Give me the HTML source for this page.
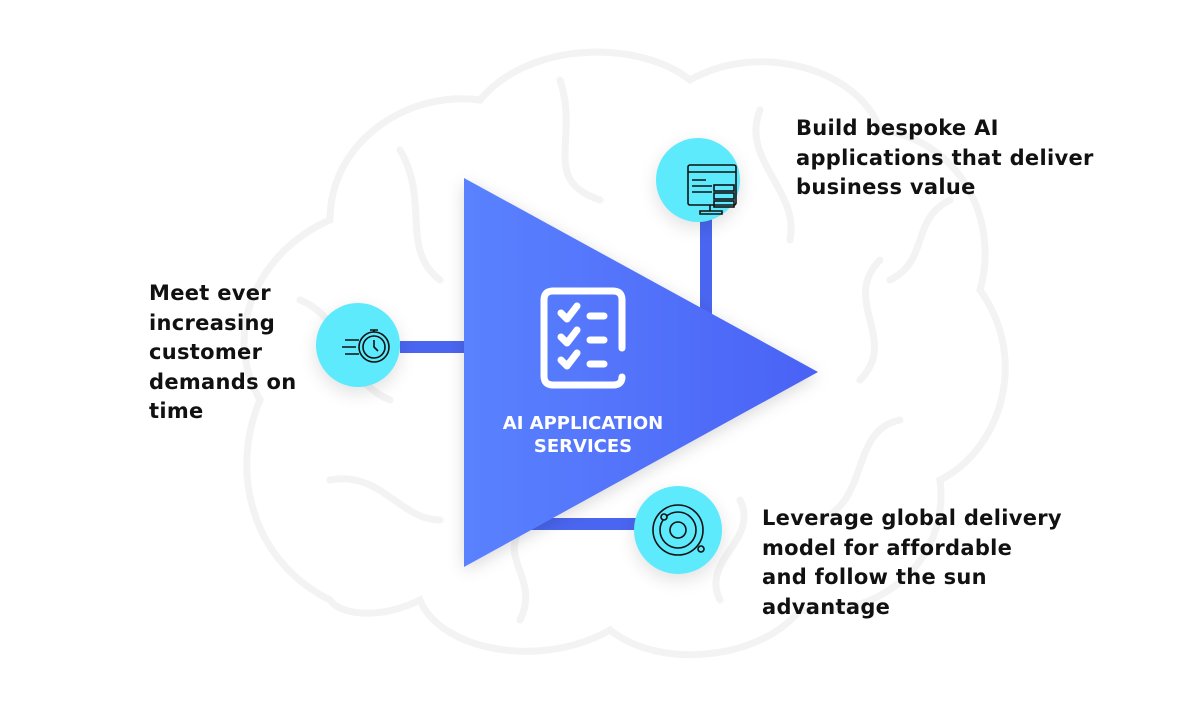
<!DOCTYPE html>
<html><head><style>
body{margin:0;width:1201px;height:701px;background:#fff;position:relative;overflow:hidden;font-family:"DejaVu Sans",sans-serif}
.t{position:absolute;font-weight:bold;font-size:21px;line-height:29.5px;color:#111;letter-spacing:0.3px;font-family:"DejaVu Sans",sans-serif}
.c{position:absolute;border-radius:50%;background:#5ceafc;box-shadow:0 6px 18px rgba(0,0,0,.12)}
.bar{position:absolute;background:#4a66f0}
</style></head><body>
<svg width="1201" height="701" style="position:absolute;left:0;top:0" fill="none" stroke="#f3f3f3" stroke-width="7" stroke-linecap="round">
<path d="M330 600 C250 560 230 470 260 400 C220 330 260 250 330 220 C330 140 410 90 480 100 C530 40 640 40 690 80 C760 40 860 70 880 130 C960 140 1000 220 980 290 C1030 360 1000 450 940 480 C950 560 880 620 800 610 C760 660 660 670 610 630 C540 670 440 650 420 600 C380 620 340 615 330 600 Z"/>
<path d="M400 150 C430 200 400 250 440 280 M560 80 C580 140 540 180 600 200 M760 110 C740 160 800 190 790 240 M880 260 C840 300 900 340 860 380 M900 420 C850 430 870 500 820 520 M300 300 C350 320 340 380 390 400 M330 480 C380 470 400 520 440 520 M720 600 C700 560 760 540 740 500 M520 620 C540 580 500 560 520 530 M950 200 C910 220 930 260 890 280"/>
</svg>
<div class="bar" style="left:400px;top:341px;width:70px;height:12px"></div>
<div class="bar" style="left:700px;top:215px;width:12px;height:100px"></div>
<div class="bar" style="left:520px;top:518px;width:120px;height:12px"></div>
<svg width="1201" height="701" style="position:absolute;left:0;top:0">
<defs><linearGradient id="g" x1="0" y1="0" x2="1" y2="0"><stop offset="0" stop-color="#5a82ff"/><stop offset="1" stop-color="#4a62f5"/></linearGradient>
<filter id="s"><feDropShadow dx="0" dy="4" stdDeviation="8" flood-opacity=".15"/></filter></defs>
<polygon points="464,178 818,372 464,567" fill="url(#g)" filter="url(#s)"/>
<g fill="none" stroke="#fff" stroke-width="7" stroke-linecap="round" stroke-linejoin="round">
<path d="M622 348 V300 Q622 291 613 291 H553 Q544 291 544 300 V376 Q544 385 553 385 H613 Q622 385 622 377"/>
<path d="M561 313 l6 6 l10 -13 M561 337 l6 6 l10 -13 M561 360 l6 6 l10 -13"/>
<path d="M590 316 H604 M590 340 H604 M590 364 H604"/>
</g>
<text x="583" y="429" text-anchor="middle" fill="#fff" font-weight="bold" font-size="18" font-family="DejaVu Sans">AI APPLICATION</text>
<text x="583" y="452" text-anchor="middle" fill="#fff" font-weight="bold" font-size="18" font-family="DejaVu Sans">SERVICES</text>
</svg>
<div class="c" style="left:656px;top:138px;width:84px;height:84px"></div>
<div class="c" style="left:316px;top:303px;width:84px;height:84px"></div>
<div class="c" style="left:634px;top:486px;width:88px;height:88px"></div>
<svg width="1201" height="701" style="position:absolute;left:0;top:0" fill="none" stroke="#111" stroke-width="1.6">
<rect x="688" y="165" width="48" height="40" rx="2"/><path d="M688 172 H736 M692 180 H706 M692 186 H712 M692 192 H712 M710 205 v6 M700 214 H722 v-3 H700 Z"/>
<rect x="714" y="185" width="20" height="6"/><rect x="714" y="193" width="20" height="6"/><rect x="714" y="201" width="20" height="6"/>
<circle cx="374" cy="347" r="15"/><circle cx="374" cy="347" r="11"/><path d="M374 340 v7 l4 4 M370 330 h8 M374 330 v2 M345 340 h14 M342 347 h14 M345 354 h14"/>
<circle cx="678" cy="530" r="25"/><circle cx="678" cy="530" r="18"/><circle cx="678" cy="530" r="8"/><circle cx="664" cy="517" r="3" fill="#5ceafc"/><circle cx="701" cy="549" r="3" fill="#5ceafc"/>
</svg>
<div class="t" style="left:796px;top:114px">Build bespoke AI<br>applications that deliver<br>business value</div>
<div class="t" style="left:149px;top:279px">Meet ever<br>increasing<br>customer<br>demands on<br>time</div>
<div class="t" style="left:762px;top:504px">Leverage global delivery<br>model for affordable<br>and follow the sun<br>advantage</div>
</body></html>
